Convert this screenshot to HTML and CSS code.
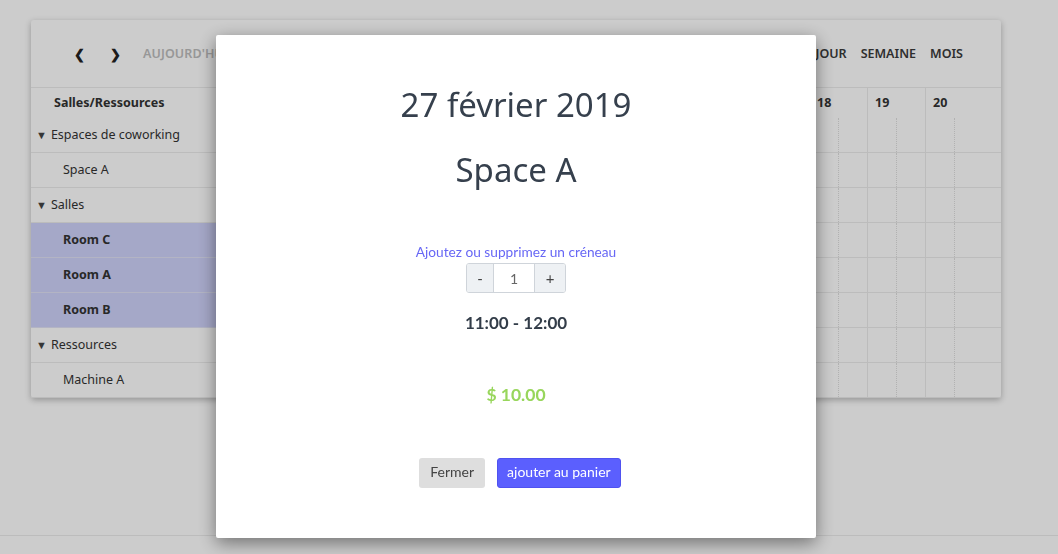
FILE: index.html
```html
<!DOCTYPE html>
<html lang="fr">
<head>
<meta charset="utf-8">
<title>Réservation</title>
<link rel="stylesheet" href="styles.css">
</head>
<body>
<div class="page">
  <div class="calendar">
    <div class="toolbar">
      <div class="nav">
        <button class="arrow">&#x276E;</button>
        <button class="arrow">&#x276F;</button>
        <button class="today">AUJOURD'HUI</button>
      </div>
      <div class="views">
        <button class="view">JOUR</button>
        <button class="view">SEMAINE</button>
        <button class="view">MOIS</button>
      </div>
    </div>
    <div class="grid">
      <div class="row head">
        <div class="res title">Salles/Ressources</div>
        <div class="track">
          <span class="dh"></span><span class="dh"></span><span class="dh"></span><span class="dh"></span><span class="dh"></span><span class="dh"></span><span class="dh"></span><span class="dh"></span><span class="dh"></span><span class="dh"></span><span class="dh">18</span><span class="dh">19</span><span class="dh last">20</span>
        </div>
      </div>
      <div class="row">
        <div class="res group"><span class="tri">▼</span>Espaces de coworking</div>
        <div class="track"><i></i><i></i><i></i><i></i><i></i><i></i><i></i><i></i><i></i><i></i><i></i><i></i><i class="last"></i></div>
      </div>
      <div class="row">
        <div class="res item">Space A</div>
        <div class="track"><i></i><i></i><i></i><i></i><i></i><i></i><i></i><i></i><i></i><i></i><i></i><i></i><i class="last"></i></div>
      </div>
      <div class="row">
        <div class="res group"><span class="tri">▼</span>Salles</div>
        <div class="track"><i></i><i></i><i></i><i></i><i></i><i></i><i></i><i></i><i></i><i></i><i></i><i></i><i class="last"></i></div>
      </div>
      <div class="row">
        <div class="res item sel">Room C</div>
        <div class="track"><i></i><i></i><i></i><i></i><i></i><i></i><i></i><i></i><i></i><i></i><i></i><i></i><i class="last"></i></div>
      </div>
      <div class="row">
        <div class="res item sel">Room A</div>
        <div class="track"><i></i><i></i><i></i><i></i><i></i><i></i><i></i><i></i><i></i><i></i><i></i><i></i><i class="last"></i></div>
      </div>
      <div class="row">
        <div class="res item sel">Room B</div>
        <div class="track"><i></i><i></i><i></i><i></i><i></i><i></i><i></i><i></i><i></i><i></i><i></i><i></i><i class="last"></i></div>
      </div>
      <div class="row">
        <div class="res group"><span class="tri">▼</span>Ressources</div>
        <div class="track"><i></i><i></i><i></i><i></i><i></i><i></i><i></i><i></i><i></i><i></i><i></i><i></i><i class="last"></i></div>
      </div>
      <div class="row">
        <div class="res item">Machine A</div>
        <div class="track"><i></i><i></i><i></i><i></i><i></i><i></i><i></i><i></i><i></i><i></i><i></i><i></i><i class="last"></i></div>
      </div>
    </div>
  </div>
  <div class="footer"></div>
</div>

<div class="backdrop"></div>
<div class="modal">
  <h2 class="date">27 février 2019</h2>
  <h2 class="space">Space A</h2>
  <p class="hint">Ajoutez ou supprimez un créneau</p>
  <div class="stepper">
    <button class="step minus">-</button>
    <span class="qty">1</span>
    <button class="step plus">+</button>
  </div>
  <p class="time">11:00 - 12:00</p>
  <p class="price">$ 10.00</p>
  <div class="actions">
    <button class="btn close">Fermer</button>
    <button class="btn add">ajouter au panier</button>
  </div>
</div>
</body>
</html>
```
FILE: styles.css
```css
* { box-sizing: border-box; }
html, body { margin: 0; padding: 0; }
body {
  background: #fff;
  font-family: "Noto Sans", "Open Sans", sans-serif;
  color: #333;
  width: 1058px;
  height: 554px;
  overflow: hidden;
}
button { font-family: inherit; border: 0; background: none; padding: 0; cursor: pointer; }

.page { padding: 20px 57px 0 31px; }

.calendar {
  width: 970px;
  background: #fff;
  border-radius: 3px;
  box-shadow: 0 2px 6px rgba(0,0,0,.28);
}
.toolbar {
  height: 68px;
  border-bottom: 1px solid #ececec;
  display: flex;
  align-items: center;
  justify-content: space-between;
  padding: 0 38px 0 30px;
}
.nav, .views { display: flex; align-items: center; }
.arrow {
  width: 36px;
  font-size: 13px;
  font-weight: 700;
  color: #222;
  text-align: center;
}
.today {
  margin-left: 10px;
  font-size: 12.5px;
  font-weight: 600;
  color: #bdbdbd;
  letter-spacing: .1px;
}
.views { gap: 14px; }
.view { font-size: 12.5px; font-weight: 600; color: #3a3a3a; }

.grid { display: flex; flex-direction: column; }
.row { display: flex; height: 35px; }
.row.head { height: 30px; }
.res {
  width: 198px;
  flex: none;
  display: flex;
  align-items: center;
  font-size: 12.5px;
  color: #333;
  border-bottom: 1px solid #ececec;
  padding-bottom: 2px;
}
.row.head .res { border-bottom: 0; }
.res.title { padding-left: 23px; font-weight: 700; }
.res.group { padding-left: 5px; }
.tri { font-size: 11px; margin-right: 4px; color: #444; }
.res.item { padding-left: 32px; }
.res.sel { background: #cfd2fa; font-weight: 700; border-bottom-color: #e0e2f6; }

.track { flex: 1; display: flex; }
.dh {
  width: 58px;
  flex: none;
  border-left: 1px solid #ececec;
  padding: 6px 0 0 7px;
  font-size: 12.5px;
  font-weight: 700;
  color: #333;
}
.track i {
  width: 58px;
  flex: none;
  display: flex;
  border-left: 1px solid #ececec;
  border-bottom: 1px solid #ececec;
}
.track i::before {
  content: "";
  width: 28px;
  border-right: 1px dotted #dedede;
}
.track .last { flex: 1; }

.footer {
  margin: 137px -57px 0 -31px;
  border-top: 1px solid #ececec;
}

.backdrop {
  position: fixed;
  inset: 0;
  background: rgba(0,0,0,.2);
}

.modal {
  position: fixed;
  left: 216px;
  top: 35px;
  width: 600px;
  height: 503px;
  background: #fff;
  border-radius: 2px;
  box-shadow: 0 5px 18px rgba(0,0,0,.45);
  display: flex;
  flex-direction: column;
  align-items: center;
  padding-top: 50px;
  font-family: "Lato", "Noto Sans", sans-serif;
  color: #3b4451;
}
.modal h2 {
  margin: 0;
  font-family: "Noto Sans", sans-serif;
  font-weight: 400;
  font-size: 33px;
  line-height: 40px;
  color: #36404d;
}
.modal .space { margin-top: 25px; }
.hint {
  margin: 53px 0 0;
  font-size: 13.7px;
  line-height: 18px;
  color: #6767f5;
}
.stepper {
  margin-top: 2px;
  display: flex;
  height: 30px;
  border: 1px solid #cfd4da;
  border-radius: 3px;
  overflow: hidden;
}
.step {
  background: #eef1f4;
  color: #444;
  font-size: 15px;
}
.minus { width: 27px; border-right: 1px solid #cfd4da; }
.plus { width: 31px; border-left: 1px solid #cfd4da; }
.qty {
  width: 40px;
  display: flex;
  align-items: center;
  justify-content: center;
  font-size: 14px;
  color: #666;
}
.time {
  margin: 19px 0 0;
  font-size: 17px;
  line-height: 22px;
  font-weight: 700;
  color: #333d49;
}
.price {
  margin: 50px 0 0;
  font-size: 17.5px;
  line-height: 22px;
  font-weight: 700;
  color: #98d65c;
}
.actions {
  margin: 52px 0 0 8px;
  display: flex;
  gap: 12px;
}
.btn {
  height: 30px;
  border-radius: 3px;
  font-family: "Lato", "Noto Sans", sans-serif;
  font-size: 14px;
  line-height: 1;
  display: flex;
  align-items: center;
  justify-content: center;
  padding: 0 11px 2px;
}
.close { background: #dedede; color: #444; }
.add { background: #5b5ffe; color: #fff; border: 1px solid #4f52f0; padding: 0 9px 2px; }
```
